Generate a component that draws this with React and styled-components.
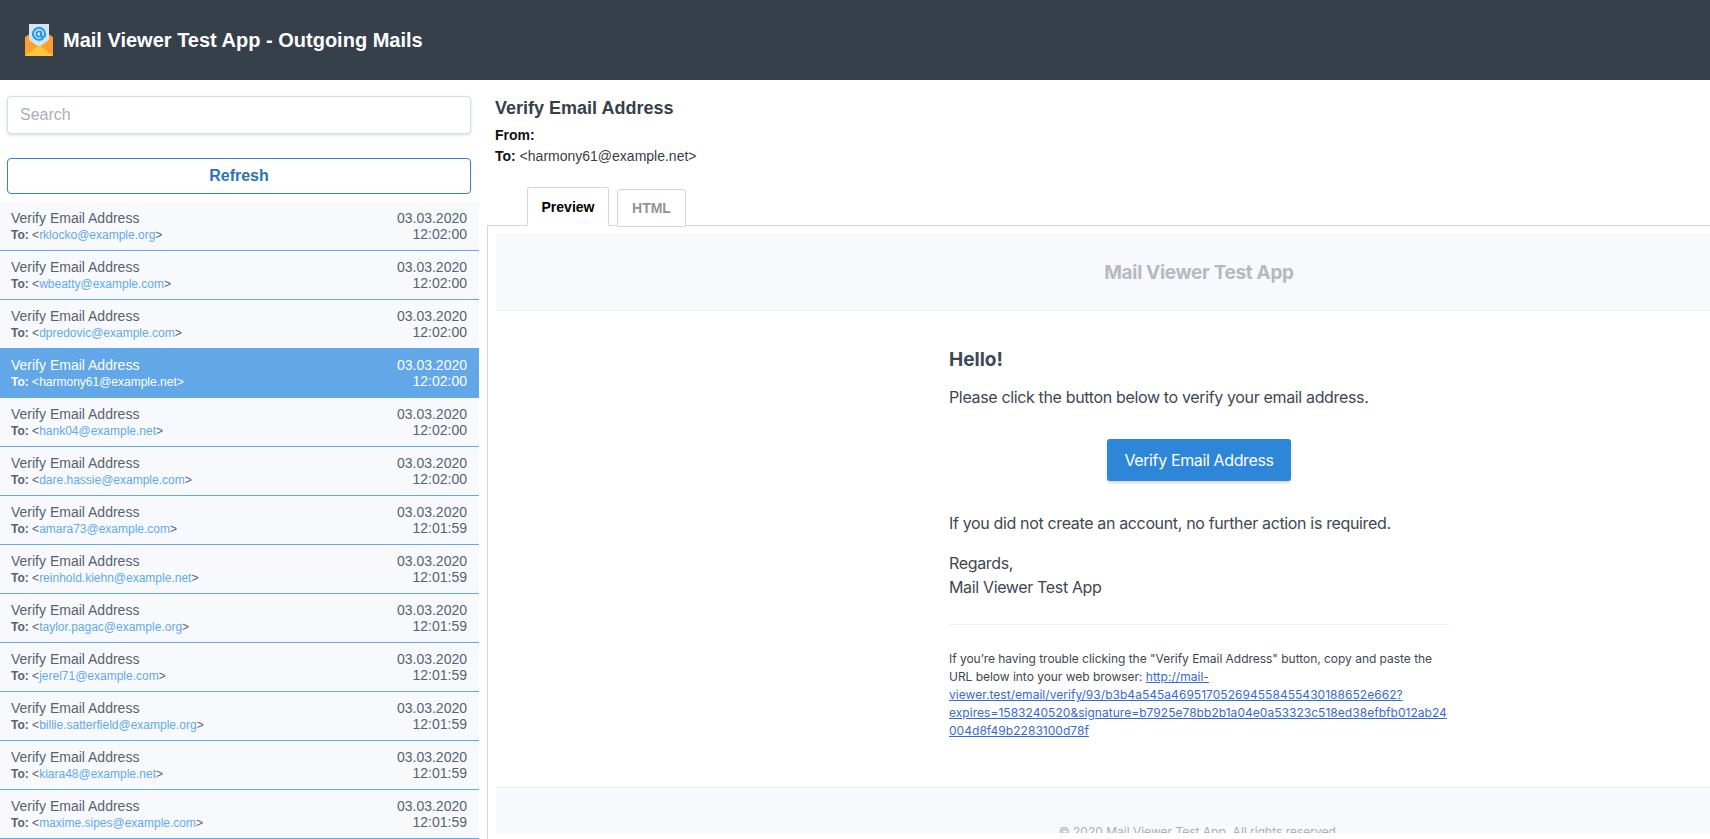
import React, {useState} from 'react'
import styled, {createGlobalStyle} from "styled-components"

const GlobalStyle = createGlobalStyle`
    html, body {
        margin: 0;
        height: 100%;
        overflow: hidden;
        background: #fff;
        font-family: "Liberation Sans", Arial, sans-serif;
    }
    * {
        box-sizing: border-box;
    }
`;

const mails = [
    {to: "rklocko@example.org", time: "12:02:00"},
    {to: "wbeatty@example.com", time: "12:02:00"},
    {to: "dpredovic@example.com", time: "12:02:00"},
    {to: "harmony61@example.net", time: "12:02:00"},
    {to: "hank04@example.net", time: "12:02:00"},
    {to: "dare.hassie@example.com", time: "12:02:00"},
    {to: "amara73@example.com", time: "12:01:59"},
    {to: "reinhold.kiehn@example.net", time: "12:01:59"},
    {to: "taylor.pagac@example.org", time: "12:01:59"},
    {to: "jerel71@example.com", time: "12:01:59"},
    {to: "billie.satterfield@example.org", time: "12:01:59"},
    {to: "kiara48@example.net", time: "12:01:59"},
    {to: "maxime.sipes@example.com", time: "12:01:59"},
];

const verifyUrl = "http://mail-viewer.test/email/verify/93/b3b4a545a469517052694558455430188652e662?expires=1583240520&signature=b7925e78bb2b1a04e0a53323c518ed38efbfb012ab24004d8f49b2283100d78f";

function Logo() {
    return (
        <svg width="28" height="32" viewBox="0 0 28 32" style={{flex: "none"}}>
            <path d="M0 13 L14 4 L28 13 V31 a1 1 0 0 1 -1 1 H1 a1 1 0 0 1 -1 -1 Z" fill="#ff9a2b" />
            <path d="M4 0 H24 V22 H4 Z" fill="#cfe7fa" />
            {/* the @ sign: thick blue strokes with a light core */}
            <path d="M17.6 14.6 A6 6 0 1 1 20 10 V11 a2 2 0 0 1 -4 0 V7.6" fill="none" stroke="#2794ee" strokeWidth="2" strokeLinecap="round" />
            <circle cx="14" cy="10" r="2.6" fill="none" stroke="#2794ee" strokeWidth="1.8" />
            <path d="M0 13 L14 23 L28 13 V31 a1 1 0 0 1 -1 1 H1 a1 1 0 0 1 -1 -1 Z" fill="#ff9f2e" />
            <path d="M0 32 L14 21 L28 32 Z" fill="#ffc63d" />
        </svg>
    )
}

export default function App() {
    const [active, setActive] = useState("harmony61@example.net");
    const [tab, setTab] = useState("preview");

    return (
        <Page>
            <GlobalStyle />
            <TopBar>
                <Logo />
                <AppTitle>Mail Viewer Test App - Outgoing Mails</AppTitle>
            </TopBar>
            <Main>
                <Sidebar>
                    <SearchInput placeholder="Search" />
                    <RefreshButton>Refresh</RefreshButton>
                    <MailList>
                        {mails.map((mail)=>(
                            <MailRow key={mail.to} $selected={mail.to === active} onClick={()=>setActive(mail.to)}>
                                <div>
                                    <Subject>Verify Email Address</Subject>
                                    <Recipient>
                                        <b>To: </b>&lt;<Address $selected={mail.to === active}>{mail.to}</Address>&gt;
                                    </Recipient>
                                </div>
                                <Stamp>03.03.2020<br />{mail.time}</Stamp>
                            </MailRow>
                        ))}
                    </MailList>
                </Sidebar>
                <Detail>
                    <DetailHead>
                        <DetailTitle>Verify Email Address</DetailTitle>
                        <MetaLine><b>From:</b></MetaLine>
                        <MetaLine><b>To:</b> &lt;{active}&gt;</MetaLine>
                    </DetailHead>
                    <Tabs>
                        <Tab $active={tab === "preview"} onClick={()=>setTab("preview")}>Preview</Tab>
                        <Tab $active={tab === "html"} onClick={()=>setTab("html")}>HTML</Tab>
                    </Tabs>
                    <Panel>
                        <MailSheet>
                            <MailBanner>Mail Viewer Test App</MailBanner>
                            <MailBody>
                                <MailColumn>
                                    <Hello>Hello!</Hello>
                                    <MailText>Please click the button below to verify your email address.</MailText>
                                    <VerifyButton>Verify Email Address</VerifyButton>
                                    <MailText>If you did not create an account, no further action is required.</MailText>
                                    <Regards>Regards,<br />Mail Viewer Test App</Regards>
                                    <Subcopy>
                                        If you’re having trouble clicking the "Verify Email Address" button, copy and paste the URL below into your web browser: <a href="#verify">{verifyUrl}</a>
                                    </Subcopy>
                                </MailColumn>
                            </MailBody>
                            <MailFooter>© 2020 Mail Viewer Test App. All rights reserved.</MailFooter>
                        </MailSheet>
                    </Panel>
                </Detail>
            </Main>
        </Page>
    )
}

const Page = styled.div`
    display: flex;
    flex-direction: column;
    height: 100vh;
    overflow: hidden;
`;

const TopBar = styled.header`
    flex: none;
    display: flex;
    align-items: center;
    gap: 10px;
    height: 80px;
    padding-left: 25px;
    background-color: #36404a;
`;

const AppTitle = styled.h1`
    margin: 0;
    color: #fff;
    font-size: 20px;
    font-weight: bold;
`;

const Main = styled.main`
    flex: 1;
    min-height: 0;
    display: flex;
`;

const Sidebar = styled.aside`
    flex: none;
    width: 479px;
    display: flex;
    flex-direction: column;
    padding-top: 16px;
    overflow: hidden;
`;

const SearchInput = styled.input`
    flex: none;
    width: 464px;
    height: 38px;
    margin-left: 7px;
    padding: 0 12px;
    border: 1px solid #d5dde6;
    border-radius: 4px;
    box-shadow: 0 1px 3px rgba(60, 80, 110, 0.22);
    font-family: inherit;
    font-size: 16px;
    color: #36404a;
    outline: none;
    &::placeholder {
        color: #a9b0b7;
    }
`;

const RefreshButton = styled.button`
    flex: none;
    width: 464px;
    height: 36px;
    margin: 24px 0 8px 7px;
    border: 1px solid #3381d2;
    border-radius: 4px;
    background-color: #fff;
    color: #2a72bb;
    font-family: inherit;
    font-size: 16px;
    font-weight: bold;
    cursor: pointer;
`;

const MailList = styled.div`
    flex: none;
`;

const MailRow = styled.div`
    display: flex;
    justify-content: space-between;
    height: 49px;
    padding: 8px 12px 0 11px;
    background-color: ${(p) => (p.$selected ? "#62a7e8" : "#f8f9fd")};
    border-bottom: 1px solid ${(p) => (p.$selected ? "#62a7e8" : "#63a9e9")};
    color: ${(p) => (p.$selected ? "#fff" : "#56636f")};
    cursor: pointer;
`;

const Subject = styled.div`
    font-size: 14px;
    line-height: 16px;
`;

const Recipient = styled.div`
    margin-top: 1px;
    font-size: 12px;
    line-height: 16px;
`;

const Address = styled.span`
    color: ${(p) => (p.$selected ? "#fff" : "#5faaee")};
`;

const Stamp = styled.div`
    font-size: 14px;
    line-height: 16px;
    text-align: right;
`;

const Detail = styled.section`
    flex: 1;
    min-width: 0;
    display: flex;
    flex-direction: column;
    overflow: hidden;
`;

const DetailHead = styled.div`
    flex: none;
    height: 107px;
    padding: 18px 0 0 16px;
    color: #36404a;
`;

const DetailTitle = styled.h2`
    margin: 0 0 6px;
    font-size: 18px;
    line-height: 21px;
    font-weight: bold;
`;

const MetaLine = styled.div`
    margin-bottom: 1px;
    font-size: 14px;
    line-height: 20px;
    color: #36404a;
    b {
        color: #111;
    }
`;

const Tabs = styled.div`
    flex: none;
    display: flex;
    align-items: flex-start;
    gap: 8px;
    height: 38px;
    margin-left: 48px;
    position: relative;
    z-index: 1;
`;

const Tab = styled.button`
    height: ${(p) => (p.$active ? "39px" : "38px")};
    margin-top: ${(p) => (p.$active ? "0" : "2px")};
    padding: 0;
    width: ${(p) => (p.$active ? "82px" : "69px")};
    border: 1px solid #d6d6d6;
    border-bottom-color: ${(p) => (p.$active ? "#fff" : "#d6d6d6")};
    border-radius: 3px 3px 0 0;
    background-color: #fff;
    color: ${(p) => (p.$active ? "#000" : "#949494")};
    font-family: inherit;
    font-size: 14px;
    font-weight: bold;
    cursor: pointer;
`;

const Panel = styled.div`
    flex: 1;
    min-height: 0;
    margin-left: 8px;
    padding: 8px 0 6px 8px;
    border-top: 1px solid #d6d6d6;
    border-left: 1px solid #d6d6d6;
    overflow: hidden;
`;

const MailSheet = styled.div`
    width: 1406px;
    height: 100%;
    overflow: hidden;
    font-family: Inter, "Liberation Sans", sans-serif;
    color: #3d4852;
`;

const MailBanner = styled.div`
    height: 77px;
    border-bottom: 1px solid #edeff2;
    background-color: #f8f9fc;
    color: #b6babe;
    font-size: 19px;
    font-weight: bold;
    letter-spacing: -0.33px;
    line-height: 77px;
    text-align: center;
`;

const MailBody = styled.div`
    height: 476px;
    display: flex;
    justify-content: center;
    padding-top: 36px;
`;

const MailColumn = styled.div`
    width: 500px;
`;

const Hello = styled.h1`
    margin: 0 0 12px;
    font-size: 19px;
    line-height: 26px;
    font-weight: bold;
`;

const MailText = styled.p`
    margin: 0;
    font-size: 16px;
    line-height: 24px;
    letter-spacing: -0.35px;
`;

const VerifyButton = styled.a`
    display: block;
    width: 184px;
    height: 42px;
    margin: 30px auto;
    border-radius: 3px;
    background-color: #2e86d8;
    box-shadow: 0 2px 3px rgba(0, 0, 0, 0.16);
    color: #fff;
    font-size: 16px;
    letter-spacing: -0.37px;
    line-height: 42px;
    text-align: center;
`;

const Regards = styled(MailText)`
    margin-top: 16px;
`;

const Subcopy = styled.p`
    margin: 25px 0 0;
    padding-top: 25px;
    border-top: 1px solid #edeff2;
    font-size: 12px;
    line-height: 18px;
    letter-spacing: -0.03px;
    overflow-wrap: anywhere;
    a {
        color: #3869d4;
        letter-spacing: 0.035px;
    }
`;

const MailFooter = styled.div`
    height: 46px;
    padding-top: 35px;
    border-top: 1px solid #edeff2;
    background-color: #f8f9fc;
    color: #aeaeae;
    font-size: 12px;
    line-height: 18px;
    text-align: center;
`;
